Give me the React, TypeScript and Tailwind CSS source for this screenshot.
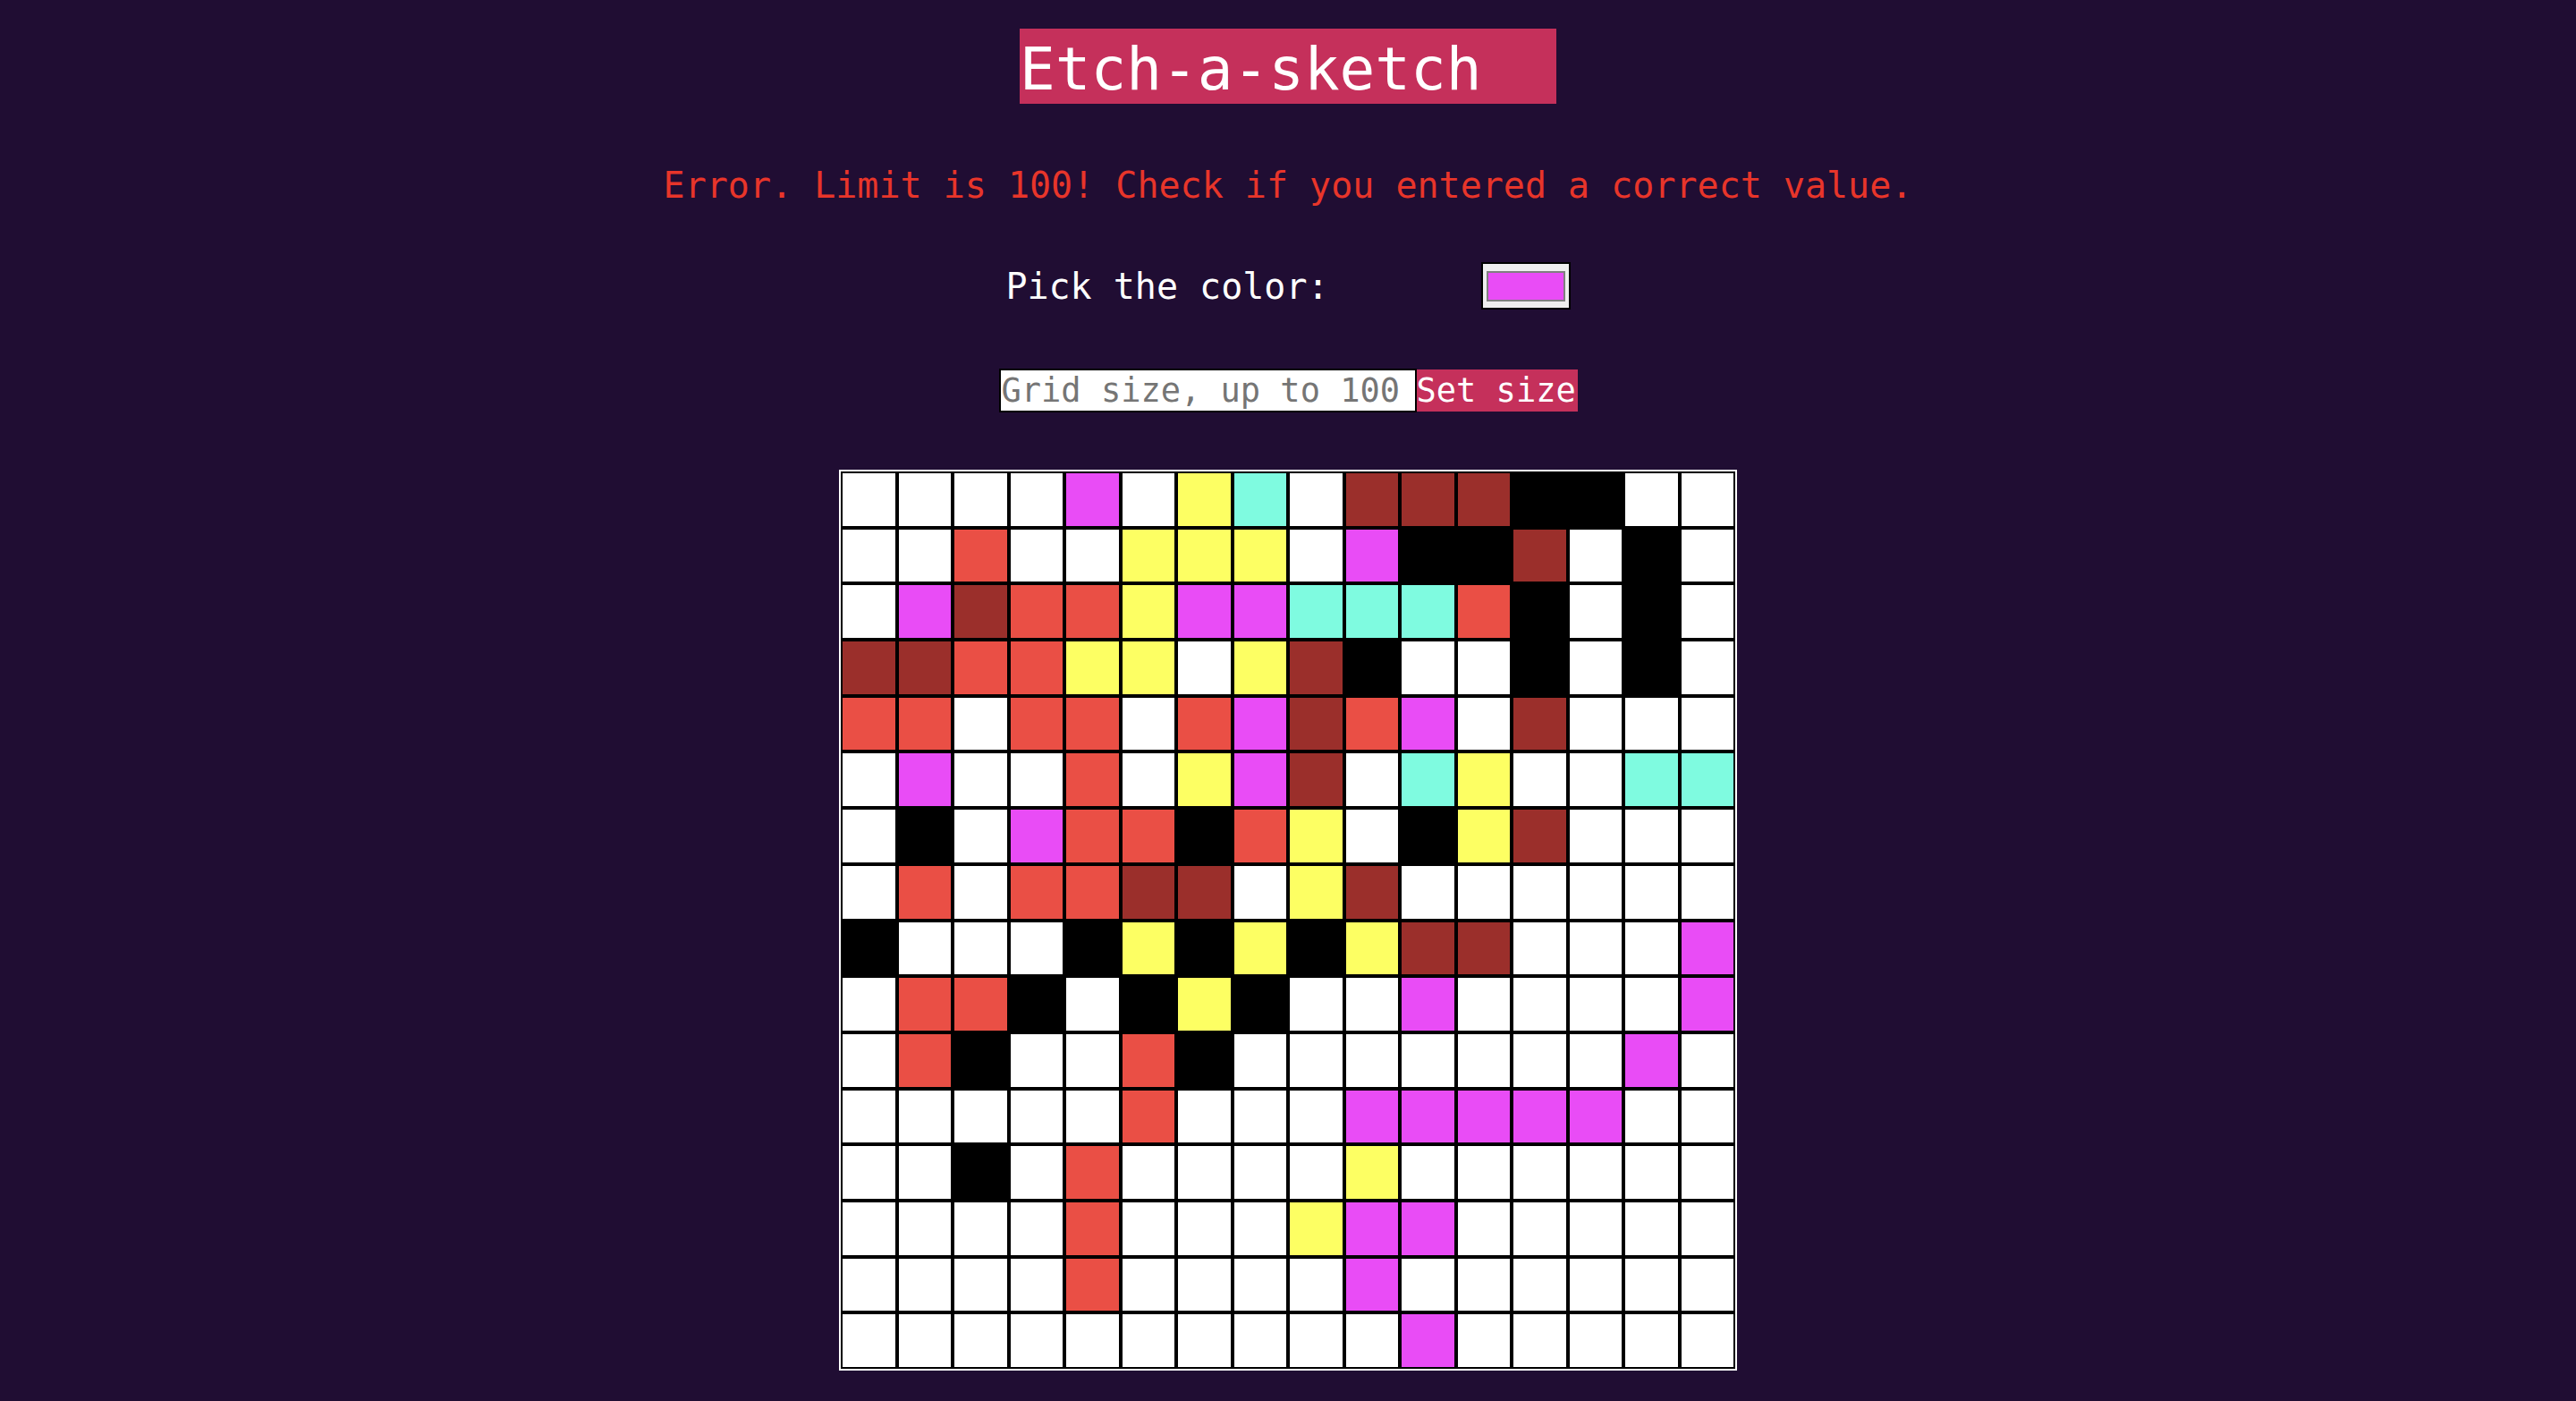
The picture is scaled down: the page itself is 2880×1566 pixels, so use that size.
import React from "react";

const COLORS: Record<string, string> = {
  W: "#ffffff",
  M: "#e94cf6",
  Y: "#fdff63",
  C: "#7ffbe0",
  D: "#9b2f2b",
  R: "#ea4f45",
  K: "#000000",
};

const ROWS = [
  "WWWWMWYCWDDDKKWW",
  "WWRWWYYYWMKKDWKW",
  "WMDRRYMMCCCRKWKW",
  "DDRRYYWYDKWWKWKW",
  "RRWRRWRMDRMWDWWW",
  "WMWWRWYMDWCYWWCC",
  "WKWMRRKRYWKYDWWW",
  "WRWRRDDWYDWWWWWW",
  "KWWWKYKYKYDDWWWM",
  "WRRKWKYKWWMWWWWM",
  "WRKWWRKWWWWWWWMW",
  "WWWWWRWWWMMMMMWW",
  "WWKWRWWWWYWWWWWW",
  "WWWWRWWWYMMWWWWW",
  "WWWWRWWWWMWWWWWW",
  "WWWWWWWWWWMWWWWW",
];

export default function App() {
  return (
    <div className="min-h-screen w-full bg-[#200d33] font-['DejaVu_Sans_Mono',monospace] flex flex-col items-center pt-[32px]">
      <h1 className="w-[600px] h-[84px] bg-[#c5305b] text-white text-[66px] leading-[84px] pt-[4px] pl-0 m-0 font-normal whitespace-nowrap">
        Etch-a-sketch
      </h1>

      <p className="mt-[67px] text-[40px] leading-[48px] text-[#e8352a] text-center m-0 whitespace-nowrap">
        Error. Limit is 100! Check if you entered a correct value.
      </p>

      <div className="mt-[62px] flex items-center gap-[170px] h-[53px]">
        <span className="text-[40px] leading-[48px] text-white whitespace-nowrap">Pick the color:</span>
        <div className="w-[100px] h-[53px] border-2 border-black bg-[#efefef] flex items-center justify-center">
          <div className="w-[88px] h-[34px] border-2 border-[#808080] bg-[#e94cf6]" />
        </div>
      </div>

      <div className="mt-[66px] flex items-center h-[49px]">
        <input
          type="text"
          placeholder="Grid size, up to 100"
          className="w-[467px] h-[49px] border-2 border-black bg-white px-[1px] text-[37px] text-black placeholder:text-[#757575] outline-none font-['DejaVu_Sans_Mono',monospace]"
        />
        <button className="w-[180px] h-[47px] bg-[#c5305b] text-white text-[37px] leading-[47px] px-0 text-left whitespace-nowrap overflow-hidden font-['DejaVu_Sans_Mono',monospace]">
          Set size
        </button>
      </div>

      <div className="mt-[64px] border-2 border-white">
        <div className="w-[1000px] h-[1003px] grid grid-cols-[repeat(16,1fr)] grid-rows-[repeat(16,1fr)]">
          {ROWS.flatMap((row, r) =>
            row.split("").map((c, i) => (
              <div
                key={`${r}-${i}`}
                className="border-2 border-black"
                style={{ backgroundColor: COLORS[c] }}
              />
            ))
          )}
        </div>
      </div>
    </div>
  );
}
